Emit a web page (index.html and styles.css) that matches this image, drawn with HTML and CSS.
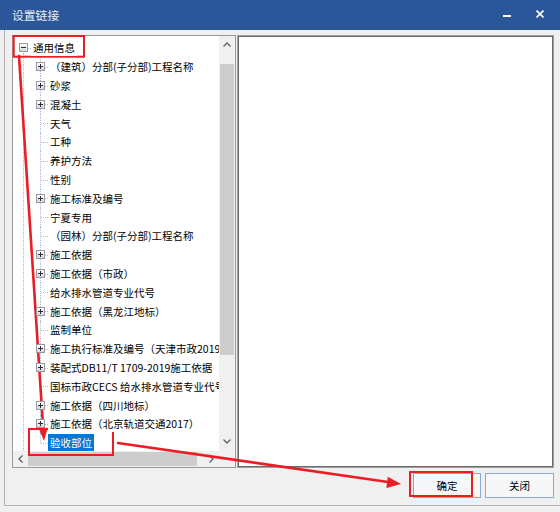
FILE: index.html
```html
<!DOCTYPE html>
<html lang="zh-CN">
<head>
<meta charset="utf-8">
<title>设置链接</title>
<link rel="stylesheet" href="styles.css">
</head>
<body>
<div class="dialog">
  <div class="titlebar">
    <span class="title">设置链接</span>
    <span class="tb-min"></span>
    <svg class="tb-close" width="8" height="8" viewBox="0 0 8 8"><path d="M0.5 0.5L7.5 7.5M7.5 0.5L0.5 7.5" stroke="#ffffff" stroke-width="1.6"/></svg>
  </div>
  <div class="frame">
    <div class="panes">
      <div class="treebox">
        <div class="tree-main">
          <div class="tree-view">
            <div class="tree-body">
              <div class="row root"><span class="exp"></span><span class="label">通用信息</span></div>
              <div class="row child"><span class="exp plus"></span><span class="label">（建筑）分部(子分部)工程名称</span></div>
              <div class="row child"><span class="exp plus"></span><span class="label">砂浆</span></div>
              <div class="row child"><span class="exp plus"></span><span class="label">混凝土</span></div>
              <div class="row child"><span class="exp none"></span><span class="label">天气</span></div>
              <div class="row child"><span class="exp none"></span><span class="label">工种</span></div>
              <div class="row child"><span class="exp none"></span><span class="label">养护方法</span></div>
              <div class="row child"><span class="exp none"></span><span class="label">性别</span></div>
              <div class="row child"><span class="exp plus"></span><span class="label">施工标准及编号</span></div>
              <div class="row child"><span class="exp none"></span><span class="label">宁夏专用</span></div>
              <div class="row child"><span class="exp none"></span><span class="label">（园林）分部(子分部)工程名称</span></div>
              <div class="row child"><span class="exp plus"></span><span class="label">施工依据</span></div>
              <div class="row child"><span class="exp plus"></span><span class="label">施工依据（市政）</span></div>
              <div class="row child"><span class="exp none"></span><span class="label">给水排水管道专业代号</span></div>
              <div class="row child"><span class="exp plus"></span><span class="label">施工依据（黑龙江地标）</span></div>
              <div class="row child"><span class="exp none"></span><span class="label">监制单位</span></div>
              <div class="row child"><span class="exp plus"></span><span class="label">施工执行标准及编号（天津市政2019）</span></div>
              <div class="row child"><span class="exp plus"></span><span class="label">装配式DB11/T 1709-2019施工依据</span></div>
              <div class="row child"><span class="exp none"></span><span class="label">国标市政CECS 给水排水管道专业代号</span></div>
              <div class="row child"><span class="exp plus"></span><span class="label">施工依据（四川地标）</span></div>
              <div class="row child"><span class="exp plus"></span><span class="label">施工依据（北京轨道交通2017）</span></div>
              <div class="row child last"><span class="exp none"></span><span class="label selected">验收部位</span></div>
            </div>
          </div>
          <div class="vscroll">
            <div class="sb-btn"><svg width="8" height="5" viewBox="0 0 8 5"><path d="M0.5 4.5L4 1L7.5 4.5" fill="none" stroke="#606060" stroke-width="1.3"/></svg></div>
            <div class="v-thumb"></div>
            <div class="sb-fill"></div>
            <div class="sb-btn down"><svg width="8" height="5" viewBox="0 0 8 5"><path d="M0.5 0.5L4 4L7.5 0.5" fill="none" stroke="#606060" stroke-width="1.3"/></svg></div>
          </div>
        </div>
        <div class="hscroll-row">
          <div class="hscroll">
            <div class="sb-hbtn"><svg width="5" height="8" viewBox="0 0 5 8"><path d="M4.5 0.5L1 4L4.5 7.5" fill="none" stroke="#606060" stroke-width="1.3"/></svg></div>
            <div class="h-thumb"></div>
            <div class="sb-fill"></div>
            <div class="sb-hbtn"><svg width="5" height="8" viewBox="0 0 5 8"><path d="M0.5 0.5L4 4L0.5 7.5" fill="none" stroke="#606060" stroke-width="1.3"/></svg></div>
          </div>
          <div class="corner"></div>
        </div>
      </div>
      <div class="rightbox"></div>
    </div>
    <div class="buttons">
      <button class="btn ok">确定</button>
      <button class="btn">关闭</button>
    </div>
  </div>
</div>
<svg class="annot" width="560" height="512" viewBox="0 0 560 512">
  <g fill="none" stroke="#ec1c24" stroke-width="2">
    <rect x="13.7" y="36" width="70.3" height="20.7"/>
    <rect x="29" y="429" width="84" height="26"/>
    <rect x="410" y="472" width="62" height="24"/>
  </g>
  <g stroke="#ec1c24" stroke-width="2.6" stroke-linecap="round">
    <line x1="19" y1="56" x2="43.2" y2="429"/>
    <line x1="118" y1="443" x2="388" y2="482"/>
  </g>
  <g fill="#ec1c24">
    <polygon points="44,441 47.7,427.7 38.7,428.3"/>
    <polygon points="401,484 386.4,488 387.8,476.8"/>
  </g>
</svg>
</body>
</html>
```
FILE: styles.css
```css
* { box-sizing: border-box; }

html, body {
  margin: 0;
  padding: 0;
}

body {
  width: 560px;
  height: 512px;
  overflow: hidden;
  background: #f0f0f0;
  font-family: "Noto Sans CJK SC", "Noto Sans", sans-serif;
  position: relative;
}

.dialog {
  width: 560px;
  height: 512px;
  display: flex;
  flex-direction: column;
}

.titlebar {
  height: 30px;
  flex: none;
  background: #2b579a;
  display: flex;
  align-items: center;
  padding-left: 12px;
  color: #e6ebf3;
}

.title {
  font-size: 11.8px;
  line-height: 14px;
  margin-bottom: 1px;
}

.tb-min {
  margin-left: auto;
  width: 8px;
  height: 2px;
  background: #ffffff;
  margin-right: 25px;
  margin-top: 1px;
}

.tb-close {
  margin-right: 16px;
  margin-bottom: 3px;
}

.frame {
  margin-left: 4px;
  height: 476px;
  border-left: 1px solid #b0b0b0;
  border-bottom: 1px solid #b4b4b4;
  padding: 5px 6px 0 7px;
  display: flex;
  flex-direction: column;
}

.panes {
  display: flex;
  gap: 1px;
  height: 433px;
}

.treebox {
  width: 224px;
  height: 433px;
  border: 1px solid #9a9a9a;
  background: #ffffff;
  display: flex;
  flex-direction: column;
}

.tree-main {
  display: flex;
  height: 415px;
}

.tree-view {
  width: 206px;
  height: 415px;
  overflow: hidden;
}

.tree-body {
  position: relative;
  padding-top: 2.6px;
  font-size: 10.5px;
  color: #000;
  height: 100%;
}

.tree-body::before {
  content: "";
  position: absolute;
  left: 10px;
  top: 17px;
  bottom: 0;
  border-left: 1px dotted #a9bfdc;
}

.row {
  position: relative;
  height: 18.8px;
  display: flex;
  align-items: center;
  white-space: nowrap;
}

.row.root { padding-left: 6px; }
.row.child { padding-left: 23px; }

.row.root::after {
  content: "";
  position: absolute;
  left: 15px;
  width: 3px;
  top: 50%;
  border-top: 1px dotted #a9bfdc;
}

.row.child::before {
  content: "";
  position: absolute;
  left: 27px;
  top: 0;
  bottom: 0;
  border-left: 1px dotted #a9bfdc;
}

.row.child.last::before { bottom: 50%; }

.row.child::after {
  content: "";
  position: absolute;
  left: 28px;
  width: 7px;
  top: 50%;
  border-top: 1px dotted #a9bfdc;
}

.exp {
  flex: none;
  width: 9px;
  height: 9px;
  margin-right: 3px;
  position: relative;
  z-index: 1;
  border: 1px solid #9a9a9a;
  background: linear-gradient(#ffffff, #d8d8d8);
}

.exp::before {
  content: "";
  position: absolute;
  left: 1px;
  right: 1px;
  top: 3px;
  height: 1px;
  background: #2a2a40;
}

.exp.plus::after {
  content: "";
  position: absolute;
  top: 1px;
  bottom: 1px;
  left: 3px;
  width: 1px;
  background: #2a2a40;
}

.exp.none {
  border: none;
  background: none;
  z-index: 0;
}

.exp.none::before { display: none; }

.label {
  position: relative;
  z-index: 1;
  padding: 0 2px;
  line-height: 17px;
  height: 17px;
  background: #ffffff;
}

.label.selected {
  background: #0078d7;
  color: #ffffff;
}

.vscroll {
  width: 16px;
  height: 415px;
  background: #f0f0f0;
  display: flex;
  flex-direction: column;
}

.sb-btn {
  height: 17px;
  flex: none;
  display: flex;
  align-items: center;
  justify-content: center;
}

.sb-btn.down { height: 19px; }

.v-thumb {
  margin: 11px 1px 0 1px;
  height: 291px;
  flex: none;
  background: #cdcdcd;
}

.sb-fill { flex: 1; }

.hscroll-row {
  display: flex;
  height: 16px;
}

.hscroll {
  width: 206px;
  height: 16px;
  background: #f0f0f0;
  display: flex;
  align-items: stretch;
}

.sb-hbtn {
  width: 15px;
  flex: none;
  display: flex;
  align-items: center;
  justify-content: center;
}

.h-thumb {
  width: 169px;
  flex: none;
  margin: 1px 0;
  background: #cdcdcd;
}

.corner {
  width: 16px;
  background: #f0f0f0;
}

.rightbox {
  width: 320px;
  height: 433px;
  background: #ffffff;
  border: 1px solid #a0a0a0;
  box-shadow: inset 1px 1px 0 #6a6a6a, inset -1px -1px 0 #6a6a6a;
}

.buttons {
  display: flex;
  justify-content: flex-end;
  gap: 4px;
  margin-top: 5px;
}

.btn {
  width: 69px;
  height: 25px;
  padding: 0;
  margin: 0;
  font-family: "Noto Sans CJK SC", "Noto Sans", sans-serif;
  font-size: 10.5px;
  color: #000;
  background: #f6f7f9;
  border: 1px solid #8ba8d6;
  border-radius: 0;
}

.btn.ok { width: 68px; }

.annot {
  position: absolute;
  left: 0;
  top: 0;
  pointer-events: none;
}
```
